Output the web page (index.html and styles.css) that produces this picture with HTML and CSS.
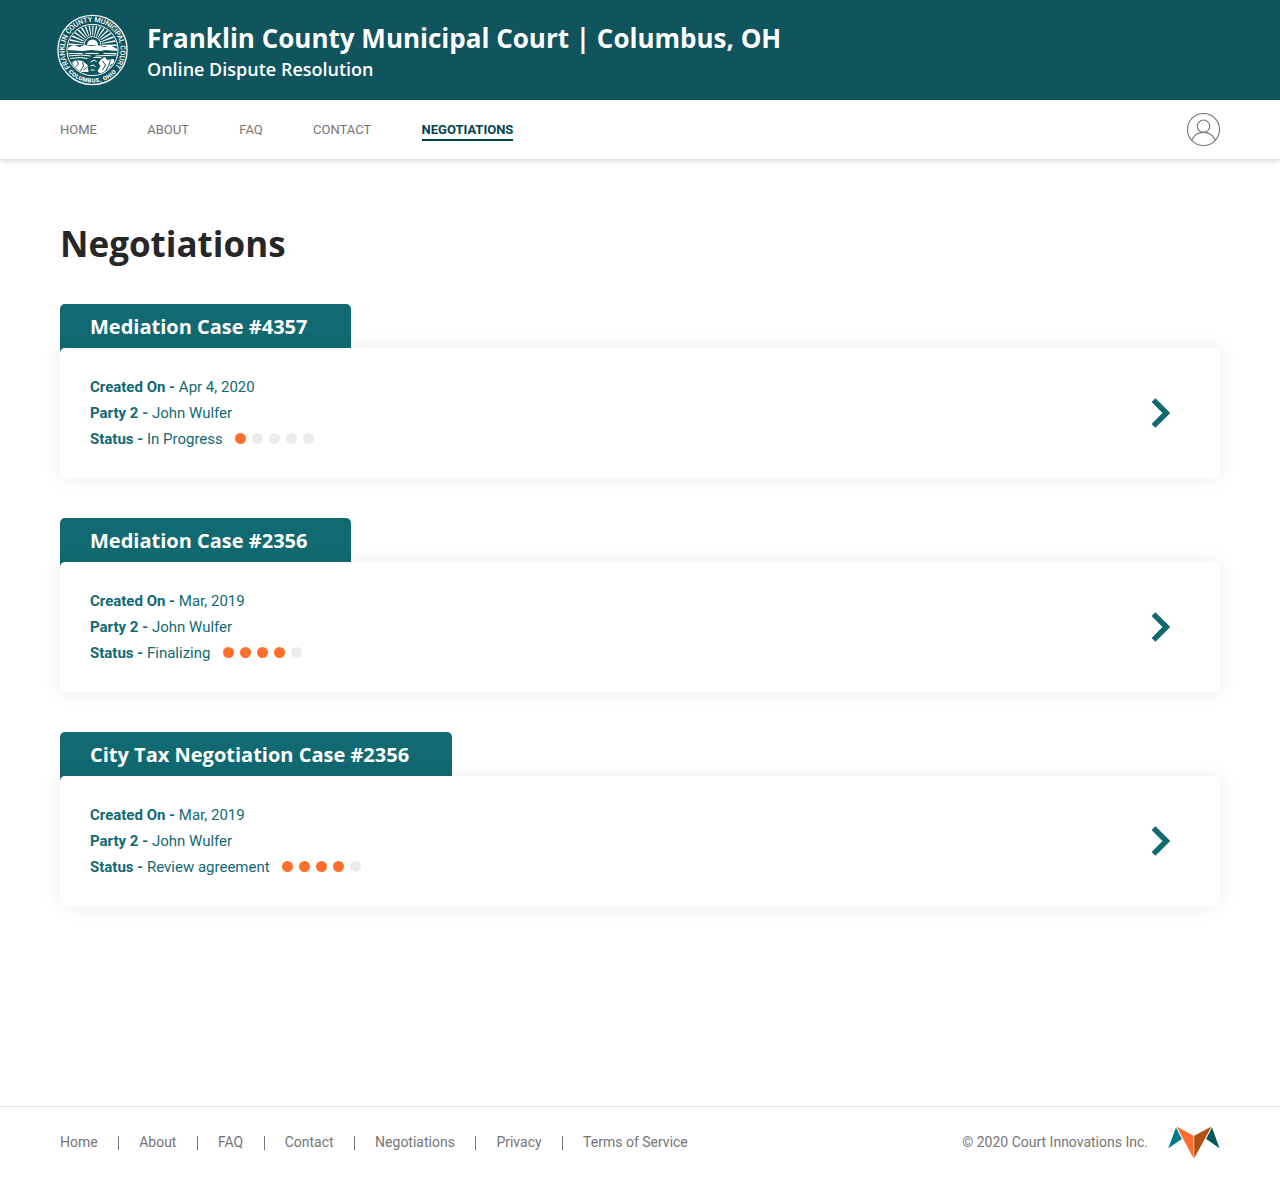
FILE: index.html
```html
<!DOCTYPE html>
<html lang="en">
<head>
<meta charset="utf-8">
<title>Negotiations</title>
<link rel="stylesheet" href="styles.css">
</head>
<body>
<header class="banner">
  <svg class="seal" viewBox="-36.500 -36 72 72" width="72" height="72" aria-hidden="true">
    <defs>
      <path id="seal-top" d="M-22.1 17.2A28 28 0 1 1 22.1 17.2"/>
      <path id="seal-bottom" d="M-28.300 16.350A32.700 32.700 0 0 0 28.300 16.350"/>
      <clipPath id="seal-clip"><circle r="24.600"/></clipPath>
    </defs>
    <circle class="seal-line" r="34.600" stroke-width="1.300"/>
    <circle class="seal-line" r="25.600" stroke-width="1"/>
    <g clip-path="url(#seal-clip)">
      <circle class="seal-line" cy="-5" r="18" stroke-width="17" stroke-dasharray="1.400 2.100"/>
      <circle class="seal-line" cy="-5" r="8.500" stroke-width=".9"/>
      <path class="seal-fill" d="M-5.500-5a5.500 5.500 0 0 1 11 0z"/>
      <path class="seal-ground" d="M-26-4H26V26H-26z"/>
      <path class="seal-fill" d="M-25-2l6-3 6 2 5-2 7 1 6-1 7 2 5-2 8 4v2l-12-1-5 1-9-1-9 1-16-1z"/>
      <path class="seal-line" d="M-24 3.500h14m3 0h13m5 0h13M-25 6l14-1 9 1m5 0l21-1M-22 8.500l10-1 7 1m6-1h8" stroke-width="1"/>
      <path class="seal-fill" d="M-20 12l4-2 6 1 5 4 1 7h-10l-2-3-4-2zM8 10l4-3 3 3 6-1 2 5-6 9H7l-2-2 3-5-2-3z"/>
      <path class="seal-cut" d="M-16 10l2 4-3 3m7-5l1 4-3 5m7-4l-4 3M10 11l3 4-3 5m8-10l-2 6-3 5m7-7l-3 2" stroke-width="1"/>
      <path class="seal-line" d="M-2 12l4-2 2 2M-2 16l3-1 2 2M-2 20h4M-24 11l3 2" stroke-width="1"/>
    </g>
    <path class="seal-mask" d="M-19 19A26.800 26.800 0 0 0 19 19L23.300 23.300A33 33 0 0 1-23.300 23.300z"/>
    <text class="seal-text"><textPath href="#seal-top" textLength="124">FRANKLIN COUNTY MUNICIPAL COURT</textPath></text>
    <text class="seal-text seal-city"><textPath href="#seal-bottom" startOffset="50%">COLUMBUS, OHIO</textPath></text>
  </svg>
  <div class="banner-text">
    <div class="court">Franklin County Municipal Court | Columbus, OH</div>
    <div class="tagline">Online Dispute Resolution</div>
  </div>
</header>
<nav class="nav">
  <a class="nav-link">HOME</a>
  <a class="nav-link">ABOUT</a>
  <a class="nav-link">FAQ</a>
  <a class="nav-link">CONTACT</a>
  <a class="nav-link nav-active">NEGOTIATIONS</a>
  <svg class="user" viewBox="0 0 34 34" width="34" height="34" aria-label="Account">
    <circle cx="17.500" cy="16.500" r="16"/>
    <circle cx="17.500" cy="13.200" r="6.200"/>
    <path d="M5.800 27.100C8 22.100 12.300 19.400 17.500 19.400s9.500 2.700 11.700 7.700"/>
  </svg>
</nav>
<main class="main">
  <h1 class="title">Negotiations</h1>
  <section class="case">
    <h2 class="case-tab">Mediation Case #4357</h2>
    <div class="card">
      <div class="details">
        <div class="row"><b>Created On -</b> Apr 4, 2020</div>
        <div class="row"><b>Party 2 -</b> John Wulfer</div>
        <div class="row"><b>Status -</b> In Progress<span class="dots"><i class="dot on"></i><i class="dot"></i><i class="dot"></i><i class="dot"></i><i class="dot"></i></span></div>
      </div>
      <svg class="chevron" viewBox="0 0 20 30" width="20" height="30"><path d="M2.500 2.100L15.400 15 2.500 27.900"/></svg>
    </div>
  </section>
  <section class="case">
    <h2 class="case-tab">Mediation Case #2356</h2>
    <div class="card">
      <div class="details">
        <div class="row"><b>Created On -</b> Mar, 2019</div>
        <div class="row"><b>Party 2 -</b> John Wulfer</div>
        <div class="row"><b>Status -</b> Finalizing<span class="dots"><i class="dot on"></i><i class="dot on"></i><i class="dot on"></i><i class="dot on"></i><i class="dot"></i></span></div>
      </div>
      <svg class="chevron" viewBox="0 0 20 30" width="20" height="30"><path d="M2.500 2.100L15.400 15 2.500 27.900"/></svg>
    </div>
  </section>
  <section class="case">
    <h2 class="case-tab">City Tax Negotiation Case #2356</h2>
    <div class="card">
      <div class="details">
        <div class="row"><b>Created On -</b> Mar, 2019</div>
        <div class="row"><b>Party 2 -</b> John Wulfer</div>
        <div class="row"><b>Status -</b> Review agreement<span class="dots"><i class="dot on"></i><i class="dot on"></i><i class="dot on"></i><i class="dot on"></i><i class="dot"></i></span></div>
      </div>
      <svg class="chevron" viewBox="0 0 20 30" width="20" height="30"><path d="M2.500 2.100L15.400 15 2.500 27.900"/></svg>
    </div>
  </section>
</main>
<footer class="footer">
  <div class="footer-links">
    <a class="footer-link">Home</a>
    <a class="footer-link">About</a>
    <a class="footer-link">FAQ</a>
    <a class="footer-link">Contact</a>
    <a class="footer-link">Negotiations</a>
    <a class="footer-link">Privacy</a>
    <a class="footer-link">Terms of Service</a>
  </div>
  <span class="copyright">© 2020 Court Innovations Inc.</span>
  <svg class="logo" viewBox="0 0 52 34" width="52" height="34" aria-hidden="true">
    <path fill="#00798a" d="M8 2.500l5.800 11.400L.3 23.300z"/>
    <path fill="#ff6c2c" d="M8.600 1.500l16.900 9.200v22.600z"/>
    <path fill="#b5510f" d="M43.600 1.500L26.200 10.700v22.600z"/>
    <path fill="#00545e" d="M44 2.500l-5.800 11.400 13.300 9.400z"/>
  </svg>
</footer>
</body>
</html>
```
FILE: styles.css
```css
* { box-sizing: border-box; }
body {
  margin: 0;
  min-height: 1178px;
  display: flex;
  flex-direction: column;
  background: #fff;
  font-family: Roboto, sans-serif;
  color: #757575;
}
.banner {
  height: 100px;
  padding: 0 56px;
  display: flex;
  align-items: center;
  gap: 19px;
  background: #10545e;
  color: #fff;
  font-family: "Open Sans", sans-serif;
}
.court { font-size: 26px; font-weight: 700; line-height: 36px; white-space: nowrap; }
.banner-text { padding-top: 1px; }
.tagline { font-size: 18px; font-weight: 600; line-height: 24px; padding-top: 1px; }
.seal-line { fill: none; stroke: #fff; }
.seal-fill { fill: #fff; }
.seal-ground, .seal-mask { fill: #10545e; }
.seal-cut { fill: none; stroke: #10545e; }
.seal-text { fill: #fff; font: 500 7.2px Roboto, sans-serif; }
.seal-city { font-size: 5.8px; font-weight: 900; letter-spacing: .45px; text-anchor: middle; }

.nav {
  height: 59px;
  padding: 0 60px;
  display: flex;
  align-items: center;
  gap: 50.3px;
  background: #fff;
  box-shadow: 0 2px 5px rgba(0, 0, 0, .16);
}
.nav-link { font-size: 13px; line-height: 18px; border-bottom: 2px solid transparent; padding-top: 3px; }
.nav-active { color: #00444b; font-weight: 700; border-color: #00444b; }
.user { margin-left: auto; fill: none; stroke: #757575; stroke-width: 1.1; }

.main { flex: 1; padding: 60px 60px 0; }
.title {
  margin: 0 0 36px;
  font: 700 35px/49px "Open Sans", sans-serif;
  color: #272727;
}
.case { display: flex; flex-direction: column; align-items: flex-start; margin-bottom: 40px; }
.case-tab {
  margin: 0 0 -6px;
  height: 50px;
  padding: 0 43.4px 0 30px;
  border-radius: 5px 5px 0 0;
  background: #116a71;
  color: #fff;
  font: 700 20px/46px "Open Sans", sans-serif;
}
.card {
  position: relative;
  width: 100%;
  height: 130px;
  padding: 0 49px 0 30px;
  display: flex;
  align-items: center;
  justify-content: space-between;
  border-radius: 5px;
  background: #fff;
  box-shadow: 0 0 20px rgba(0, 0, 0, .08);
}
.row { display: flex; align-items: center; gap: 3.8px; font-size: 15px; line-height: 26px; color: #116a71; }
.dots { display: flex; gap: 6px; margin: 0 0 2px 8.6px; }
.dot { width: 11px; height: 11px; border-radius: 50%; background: #ececec; }
.on { background: #ff6f2c; }
.chevron { fill: none; stroke: #116a71; stroke-width: 5.5; }

.footer {
  height: 72px;
  padding: 0 60px 1px;
  display: flex;
  align-items: center;
  border-top: 1px solid #e8e8e8;
  font-size: 14px;
}
.footer-links { display: flex; margin-right: auto; padding-top: 1px; }
.footer-link { height: 14px; line-height: 13px; }
.footer-link + .footer-link { margin-left: 20.3px; padding-left: 20.2px; border-left: 1px solid #757575; }
.copyright { line-height: 16px; padding-bottom: 1px; }
.logo { margin-left: 20px; }
```
